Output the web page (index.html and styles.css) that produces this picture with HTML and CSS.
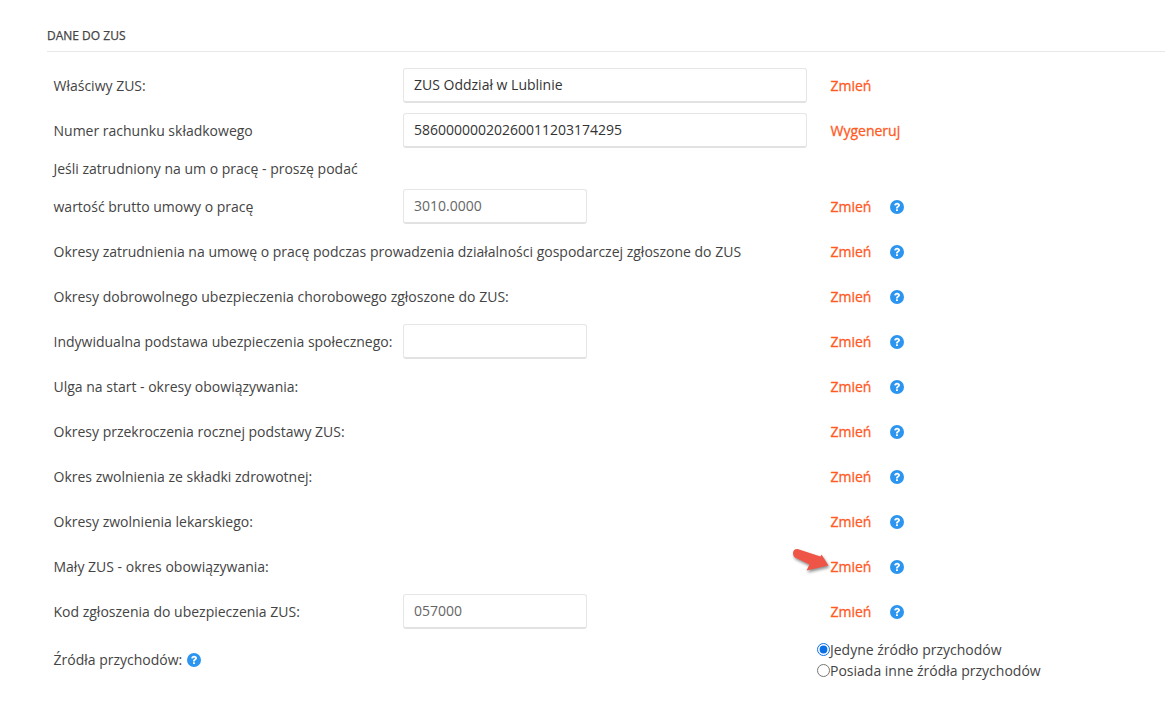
FILE: index.html
```html
<!DOCTYPE html>
<html lang="pl">
<head>
    <meta charset="UTF-8">
    <meta name="viewport" content="width=device-width, initial-scale=1.0">
    <title>Dane do ZUS</title>
    <link rel="stylesheet" href="styles.css">
</head>
<body>
    <div class="zus-section">
        <h4 class="section-title">Dane do ZUS</h4>

        <div class="form-rows">
            <div class="form-row">
                <label>Właściwy ZUS:</label>
                <div class="field"><input class="input-wide input-dark" type="text" value="ZUS Oddział w Lublinie"></div>
                <a class="action">Zmień</a>
            </div>
            <div class="form-row">
                <label>Numer rachunku składkowego</label>
                <div class="field"><input class="input-wide input-dark" type="text" value="58600000020260011203174295"></div>
                <a class="action">Wygeneruj</a>
            </div>
            <div class="form-note">Jeśli zatrudniony na um o pracę - proszę podać</div>
            <div class="form-row">
                <label>wartość brutto umowy o pracę</label>
                <div class="field"><input class="input-short" type="text" value="3010.0000"></div>
                <a class="action">Zmień</a>
                <svg class="help" viewBox="0 0 14 14"><use href="#help-icon"></use></svg>
            </div>
            <div class="form-row">
                <label class="label-long">Okresy zatrudnienia na umowę o pracę podczas prowadzenia działalności gospodarczej zgłoszone do ZUS</label>
                <a class="action">Zmień</a>
                <svg class="help" viewBox="0 0 14 14"><use href="#help-icon"></use></svg>
            </div>
            <div class="form-row">
                <label class="label-long">Okresy dobrowolnego ubezpieczenia chorobowego zgłoszone do ZUS:</label>
                <a class="action">Zmień</a>
                <svg class="help" viewBox="0 0 14 14"><use href="#help-icon"></use></svg>
            </div>
            <div class="form-row">
                <label>Indywidualna podstawa ubezpieczenia społecznego:</label>
                <div class="field"><input class="input-short" type="text" value=""></div>
                <a class="action">Zmień</a>
                <svg class="help" viewBox="0 0 14 14"><use href="#help-icon"></use></svg>
            </div>
            <div class="form-row">
                <label class="label-long">Ulga na start - okresy obowiązywania:</label>
                <a class="action">Zmień</a>
                <svg class="help" viewBox="0 0 14 14"><use href="#help-icon"></use></svg>
            </div>
            <div class="form-row">
                <label class="label-long">Okresy przekroczenia rocznej podstawy ZUS:</label>
                <a class="action">Zmień</a>
                <svg class="help" viewBox="0 0 14 14"><use href="#help-icon"></use></svg>
            </div>
            <div class="form-row">
                <label class="label-long">Okres zwolnienia ze składki zdrowotnej:</label>
                <a class="action">Zmień</a>
                <svg class="help" viewBox="0 0 14 14"><use href="#help-icon"></use></svg>
            </div>
            <div class="form-row">
                <label class="label-long">Okresy zwolnienia lekarskiego:</label>
                <a class="action">Zmień</a>
                <svg class="help" viewBox="0 0 14 14"><use href="#help-icon"></use></svg>
            </div>
            <div class="form-row">
                <label class="label-long">Mały ZUS - okres obowiązywania:</label>
                <a class="action action-marked">
                    <svg class="pointer" viewBox="0 0 38 24">
                        <path d="M1 6C1 3.500 3 1.800 5.500 2L28.500 9.500L29.500 7.500L36.500 18.500L14.500 23.500L17.500 17.500L3 10.500C1.800 9.500 1 8 1 6Z"/>
                    </svg>
                    Zmień
                </a>
                <svg class="help" viewBox="0 0 14 14"><use href="#help-icon"></use></svg>
            </div>
            <div class="form-row">
                <label>Kod zgłoszenia do ubezpieczenia ZUS:</label>
                <div class="field"><input class="input-short" type="text" value="057000"></div>
                <a class="action">Zmień</a>
                <svg class="help" viewBox="0 0 14 14"><use href="#help-icon"></use></svg>
            </div>
            <div class="form-row income-row">
                <label class="label-long">Źródła przychodów: <svg class="help help-inline" viewBox="0 0 14 14"><use href="#help-icon"></use></svg></label>
                <div class="radio-group">
                    <label class="radio-line"><input type="radio" name="zrodla" checked>Jedyne źródło przychodów</label>
                    <label class="radio-line"><input type="radio" name="zrodla">Posiada inne źródła przychodów</label>
                </div>
            </div>
        </div>
    </div>

    <!-- shared help icon -->
    <svg class="icon-defs" aria-hidden="true">
        <symbol id="help-icon" viewBox="0 0 14 14">
            <circle cx="7" cy="7" r="7" fill="#2b95f0"/>
            <path d="M4.200 5.300C4.300 3.700 5.500 2.700 7.100 2.700C8.800 2.700 10 3.700 10 5.100C10 6.200 9.400 6.800 8.600 7.200C8 7.600 7.900 7.800 7.900 8.500H6C6 7.300 6.400 6.800 7.100 6.300C7.700 5.900 8 5.700 8 5.300C8 4.800 7.600 4.500 7.100 4.500C6.600 4.500 6.200 4.900 6.100 5.500Z" fill="#fff"/>
            <rect x="6" y="9.200" width="1.900" height="1.900" rx="0.300" fill="#fff"/>
        </symbol>
    </svg>
</body>
</html>
```

FILE: styles.css
```css
body {
    font-family: "Open Sans", sans-serif;
    font-size: 14px;
    color: #444;
    background-color: #fff;
    margin: 0;
    padding: 0;
}

.zus-section {
    padding: 28px 0 0 47px;
}

.section-title {
    font-size: 12px;
    font-weight: 400;
    -webkit-text-stroke: 0.25px #444;
    line-height: 16px;
    color: #444;
    text-transform: uppercase;
    margin: 0;
    padding-bottom: 7px;
    border-bottom: 1px solid #e8e8e8;
}

.form-rows {
    padding: 11px 0 0 6.500px;
}

.form-row {
    display: flex;
    align-items: center;
    height: 45px;
}

.form-row label {
    width: 349.500px;
    flex: none;
}

.form-row .label-long {
    width: 777px;
}

.form-note {
    height: 31px;
    line-height: 31px;
}

.field {
    width: 427.500px;
    flex: none;
}

input[type="text"] {
    display: block;
    box-sizing: border-box;
    height: 35px;
    padding: 0 10px 2px;
    font-family: "Open Sans", sans-serif;
    font-size: 14px;
    color: #666;
    background-color: #fff;
    border: 1px solid #e6e6e6;
    border-bottom: 2px solid #e2e2e2;
    border-radius: 3px;
    outline: none;
}

.input-wide {
    width: 404px;
}

.input-short {
    width: 184px;
}

input.input-dark {
    color: #333;
}

.action {
    position: relative;
    width: 59px;
    flex: none;
    color: #ff5a1f;
    -webkit-text-stroke: 0.3px #ff5a1f;
    white-space: nowrap;
}

.pointer {
    position: absolute;
    left: -39px;
    top: -10px;
    width: 38px;
    height: 24px;
    fill: #ef5546;
    filter: drop-shadow(1px 2px 1.5px rgba(0, 0, 0, 0.45));
}

.help {
    width: 14px;
    height: 14px;
    flex: none;
}

.help-inline {
    vertical-align: -2px;
    margin-left: 1px;
}

.income-row {
    height: 50px;
    margin-top: 1px;
}

.income-row .label-long {
    width: 763.500px;
    margin-bottom: 2px;
}

.radio-group {
    display: flex;
    flex-direction: column;
}

.form-row .radio-line {
    display: flex;
    align-items: center;
    width: auto;
    height: 21px;
    margin-bottom: 0;
}

.radio-line input {
    width: 13px;
    height: 13px;
    margin: 0;
    accent-color: #0b6fe8;
}

.icon-defs {
    display: none;
}
```
